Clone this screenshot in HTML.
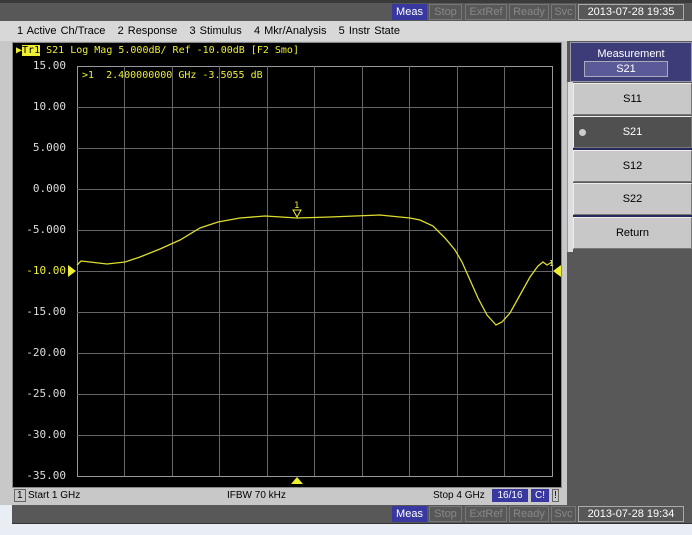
<!DOCTYPE html>
<html><head><style>
body{margin:0;width:692px;height:535px;background:#e9eef5;position:relative;overflow:hidden;font-family:"Liberation Sans",sans-serif}
div{position:absolute;box-sizing:border-box}
.mono{font-family:"DejaVu Sans Mono","Liberation Mono",monospace}
.st{top:0;height:18px;font-size:11px;line-height:16px;color:#888;border:1px solid #777;text-align:center}
.btn{left:573px;width:119px;height:32px;background:#c8c8c8;border:1px solid #eee;border-right-color:#777;border-bottom-color:#777;font-size:11px;text-align:center;line-height:30px;color:#000}
.yl{left:18px;width:48px;text-align:right;color:#ddd;font-size:11px}
</style></head><body>
<div style="left:0;top:0;width:692px;height:21px;background:#585858;border-top:3px solid #3a3a3a"></div>
<div style="left:392px;top:4px;width:35px;height:16px;background:#3838a0;color:#fff;font-size:11px;text-align:center;line-height:16px">Meas</div>
<div style="left:429px;top:4px;width:33px;height:16px;border:1px solid #777;color:#888;font-size:11px;text-align:center;line-height:14px">Stop</div>
<div style="left:465px;top:4px;width:42px;height:16px;border:1px solid #777;color:#888;font-size:11px;text-align:center;line-height:14px">ExtRef</div>
<div style="left:509px;top:4px;width:40px;height:16px;border:1px solid #777;color:#888;font-size:11px;text-align:center;line-height:14px">Ready</div>
<div style="left:551px;top:4px;width:25px;height:16px;border:1px solid #777;color:#888;font-size:11px;text-align:center;line-height:14px">Svc</div>
<div style="left:578px;top:4px;width:106px;height:16px;border:1px solid #aaa;color:#fff;font-size:11px;text-align:center;line-height:14px">2013-07-28 19:35</div>
<div style="left:0;top:21px;width:692px;height:20px;background:#d8d8d8;font-size:11px;line-height:20px;padding-left:17px;word-spacing:1px">1 Active Ch/Trace&nbsp;&nbsp; 2 Response&nbsp;&nbsp; 3 Stimulus&nbsp;&nbsp; 4 Mkr/Analysis&nbsp;&nbsp; 5 Instr State</div>
<div style="left:0;top:41px;width:567px;height:464px;background:#c8c8c8"></div>
<div style="left:12px;top:42px;width:550px;height:446px;background:#000;border:1px solid #888"></div>
<div class="mono" style="left:16px;top:44px;font-size:10px;color:#ee3;white-space:pre;line-height:13px"><span style="color:#ee3">&#9654;</span><span style="background:#ee3;color:#000">Tr1</span> S21 Log Mag 5.000dB/ Ref -10.00dB [F2 Smo]</div>
<div class="mono" style="left:82px;top:70px;font-size:10px;color:#ee3;white-space:pre">&gt;1  2.400000000 GHz -3.5055 dB</div>
<div class="mono yl" style="top:59px">15.00</div>
<div class="mono yl" style="top:100px">10.00</div>
<div class="mono yl" style="top:141px">5.000</div>
<div class="mono yl" style="top:182px">0.000</div>
<div class="mono yl" style="top:223px">-5.000</div>
<div class="mono yl" style="top:264px;color:#ee3">-10.00</div>
<div class="mono yl" style="top:305px">-15.00</div>
<div class="mono yl" style="top:346px">-20.00</div>
<div class="mono yl" style="top:387px">-25.00</div>
<div class="mono yl" style="top:428px">-30.00</div>
<div class="mono yl" style="top:469px">-35.00</div>
<svg style="position:absolute;left:0;top:0" width="692" height="535">
<g stroke="#666" stroke-width="1" fill="none">
<rect x="77.5" y="66.5" width="475" height="410" stroke="#999"/>
<path d="M124.5 66V476M172.5 66V476M219.5 66V476M267.5 66V476M314.5 66V476M362.5 66V476M409.5 66V476M457.5 66V476M504.5 66V476M77 107.5H552M77 148.5H552M77 189.5H552M77 230.5H552M77 271.5H552M77 312.5H552M77 353.5H552M77 394.5H552M77 435.5H552"/>
</g>
<polyline fill="none" stroke="#dddd30" stroke-width="1.3" points="77,265 81,261 90,262 107,264 125,262 140,257 160,249 180,240 200,228 218,222 240,218 265,216 297,218 330,217 355,216 380,215 410,218 420,220 433,226 445,238 455,250 462,262 470,280 478,298 487,315 496,325 502,322 510,313 520,295 530,277 538,266 543,262 547,265 552,262"/>
<polygon points="68,265 68,277 76,271" fill="#ee3"/>
<polygon points="561,265 561,277 553,271" fill="#ee3"/>
<polygon points="291,484 303,484 297,477" fill="#ee3"/>
<text x="294" y="208" fill="#ee3" font-size="9" font-family="DejaVu Sans Mono">1</text>
<polygon points="293,210 301,210 297,217" fill="none" stroke="#ee3"/>
<text x="549" y="266" fill="#ee3" font-size="8" font-family="DejaVu Sans Mono">1</text>
</svg>
<div style="left:12px;top:488px;width:550px;height:15px;background:#c8c8c8;font-size:10px;line-height:15px">
<span style="position:absolute;left:2px;border:1px solid #666;padding:0 2px;line-height:11px;top:1px">1</span>
<span style="position:absolute;left:16px">Start 1 GHz</span>
<span style="position:absolute;left:215px">IFBW 70 kHz</span>
<span style="position:absolute;left:421px">Stop 4 GHz</span>
<span style="position:absolute;left:480px;top:1px;width:36px;height:13px;background:#3838a0;color:#fff;text-align:center;line-height:13px">16/16</span>
<span style="position:absolute;left:519px;top:1px;width:18px;height:13px;background:#3838a0;color:#fff;text-align:center;line-height:13px">C!</span>
<span style="position:absolute;left:540px;top:1px;border:1px solid #666;line-height:11px;padding:0 1px">!</span>
</div>
<div style="left:567px;top:41px;width:125px;height:464px;background:#585858"></div>
<div style="left:570px;top:42px;width:122px;height:40px;background:#3c3c78;border:1px solid #99a;color:#fff;font-size:11px;text-align:center;padding-top:5px">Measurement</div>
<div style="left:584px;top:61px;width:84px;height:16px;background:#5a5a98;border:1px solid #aab;color:#fff;font-size:11px;text-align:center;line-height:14px">S21</div>
<div style="left:567px;top:82px;width:6px;height:170px;background:#ddd;border-left:1px solid #999"></div>
<div class="btn" style="top:83px">S11</div>
<div class="btn" style="top:116px;background:#505050;color:#fff">S21</div>
<div style="left:579px;top:129px;width:7px;height:7px;border-radius:50%;background:#ccc"></div>
<div style="left:573px;top:148px;width:119px;height:2px;background:#282860"></div>
<div class="btn" style="top:150px">S12</div>
<div class="btn" style="top:183px">S22</div>
<div style="left:573px;top:215px;width:119px;height:2px;background:#282860"></div>
<div class="btn" style="top:217px">Return</div>
<div style="left:12px;top:505px;width:680px;height:19px;background:#585858;border-bottom:1px solid #333"></div>
<div style="left:392px;top:506px;width:35px;height:16px;background:#3838a0;color:#fff;font-size:11px;text-align:center;line-height:16px">Meas</div>
<div style="left:429px;top:506px;width:33px;height:16px;border:1px solid #777;color:#888;font-size:11px;text-align:center;line-height:14px">Stop</div>
<div style="left:465px;top:506px;width:42px;height:16px;border:1px solid #777;color:#888;font-size:11px;text-align:center;line-height:14px">ExtRef</div>
<div style="left:509px;top:506px;width:40px;height:16px;border:1px solid #777;color:#888;font-size:11px;text-align:center;line-height:14px">Ready</div>
<div style="left:551px;top:506px;width:25px;height:16px;border:1px solid #777;color:#888;font-size:11px;text-align:center;line-height:14px">Svc</div>
<div style="left:578px;top:506px;width:106px;height:16px;border:1px solid #aaa;color:#fff;font-size:11px;text-align:center;line-height:14px">2013-07-28 19:34</div>
</body></html>
